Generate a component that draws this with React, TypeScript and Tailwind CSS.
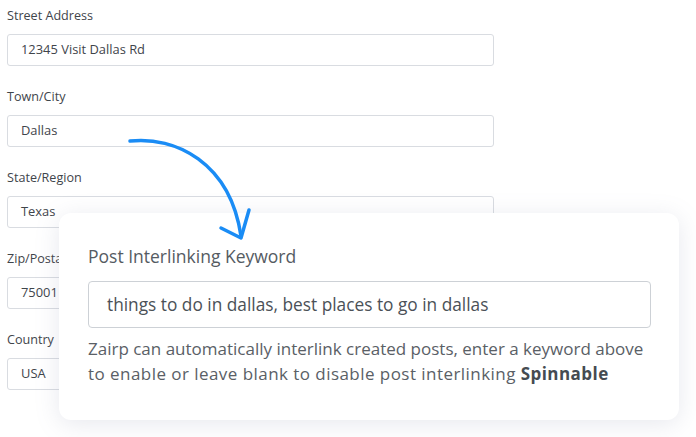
import React from "react";

const fields = [
  { label: "Street Address", value: "12345 Visit Dallas Rd" },
  { label: "Town/City", value: "Dallas" },
  { label: "State/Region", value: "Texas" },
  { label: "Zip/Postal Code", value: "75001" },
  { label: "Country", value: "USA" },
];

export default function App() {
  return (
    <div
      className="relative w-[696px] h-[437px] overflow-hidden bg-white"
      style={{ fontFamily: "'Open Sans', Lato, sans-serif" }}
    >
      {/* Address form */}
      <div className="flex flex-col w-[487px] ml-[7px] pt-[6px]">
        {fields.map((f) => (
          <div key={f.label} className="flex flex-col h-[81px]">
            <label className="text-[12.6px] leading-[20px] text-[#3f454b]">{f.label}</label>
            <div className="mt-[8px] h-[32px] flex items-center px-[13px] border border-[#d9dce1] rounded-[3px] text-[12.9px] text-[#3f454b]">
              {f.value}
            </div>
          </div>
        ))}
      </div>

      {/* Keyword card */}
      <div className="absolute left-[59px] top-[213px] w-[620px] h-[207px] bg-white rounded-[12px] shadow-[0_4px_24px_rgba(120,125,160,0.18)] px-[29px] pt-[31px]">
        <div className="text-[17.5px] leading-[24px] text-[#555b62]">Post Interlinking Keyword</div>
        <div className="mt-[13px] h-[47px] w-[563px] flex items-center px-[18px] border border-[#cdd1d6] rounded-[4px] text-[17.3px] text-[#4b5157]">
          things to do in dallas, best places to go in dallas
        </div>
        <p className="mt-[8px] w-[590px] text-[17px] leading-[25px] text-[#5a6066]">
          Zairp can automatically interlink created posts, enter a keyword above
          <br />
          <span className="tracking-[0.45px]">
            to enable or leave blank to disable post interlinking{" "}
            <span className="font-bold text-[#454b51]">Spinnable</span>
          </span>
        </p>
      </div>

      {/* Arrow */}
      <svg className="absolute left-0 top-0" width="696" height="437" viewBox="0 0 696 437" fill="none">
        <path
          d="M130 141 C 175 136 230 162 241 236"
          stroke="#1a8cf5"
          strokeWidth="3.5"
          strokeLinecap="round"
        />
        <path
          d="M221 228 L241 238 L249 210"
          stroke="#1a8cf5"
          strokeWidth="3.5"
          strokeLinecap="round"
          strokeLinejoin="round"
        />
      </svg>
    </div>
  );
}
